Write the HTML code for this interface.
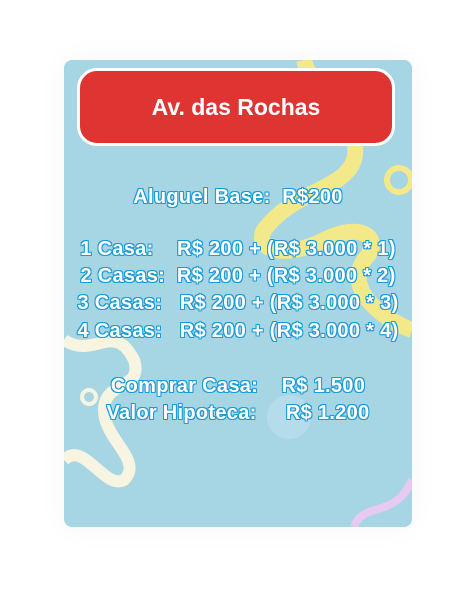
<!DOCTYPE html>
<html><head><style>
html,body{margin:0;padding:0;background:#fff;width:476px;height:596px;overflow:hidden}
.card{position:absolute;left:64px;top:60px;width:348px;height:467px;background:#a6d5e4;border-radius:8px;overflow:hidden;box-shadow:0 0 30px rgba(0,0,0,0.04)}
.hdr{position:absolute;left:13px;top:8px;width:312px;height:72px;background:#de3532;border:3px solid #fff;border-radius:20px;color:#fff;font:bold 23px "Liberation Sans",sans-serif;text-align:center;line-height:72px}
.t{position:absolute;left:0;width:348px;text-align:center;white-space:pre;color:#fff;font:bold 20px "Liberation Sans",sans-serif;letter-spacing:0.3px;
text-shadow:1px 0 0 #1b9bd6,-1px 0 0 #1b9bd6,0 1px 0 #1b9bd6,0 -1px 0 #1b9bd6,1px 1px 0 #1b9bd6,-1px -1px 0 #1b9bd6,1px -1px 0 #1b9bd6,-1px 1px 0 #1b9bd6}
svg{position:absolute;left:0;top:0}
</style></head><body>
<div class="card">
<svg width="348" height="467">
 <path d="M240 0 C250 40 300 60 290 100 C280 130 230 130 200 170 C190 190 220 200 260 180 C300 160 320 180 300 200 C280 230 320 260 348 270" fill="none" stroke="#f4e98a" stroke-width="16"/>
 <circle cx="335" cy="120" r="12" fill="none" stroke="#f4e98a" stroke-width="6"/>
 <path d="M0 280 C30 300 50 260 70 300 C80 330 40 320 40 350 C40 380 80 400 60 420 C40 430 20 380 0 400" fill="none" stroke="#f8f4e2" stroke-width="12"/>
 <circle cx="25" cy="337" r="7" fill="none" stroke="#f8f4e2" stroke-width="4"/>
 <circle cx="225" cy="357" r="22" fill="#b5dcea"/>
 <path d="M290 467 C300 440 330 460 348 420" fill="none" stroke="#e7c9f2" stroke-width="8"/>
</svg>
<div class="hdr">Av. das Rochas</div>
<div class="t" style="top:126px">Aluguel Base:  R$200</div>
<div class="t" style="top:178px">1 Casa:    R$ 200 + (R$ 3.000 * 1)</div>
<div class="t" style="top:205px">2 Casas:  R$ 200 + (R$ 3.000 * 2)</div>
<div class="t" style="top:232px">3 Casas:   R$ 200 + (R$ 3.000 * 3)</div>
<div class="t" style="top:260px">4 Casas:   R$ 200 + (R$ 3.000 * 4)</div>
<div class="t" style="top:315px">Comprar Casa:    R$ 1.500</div>
<div class="t" style="top:342px">Valor Hipoteca:     R$ 1.200</div>
</div>
</body></html>
